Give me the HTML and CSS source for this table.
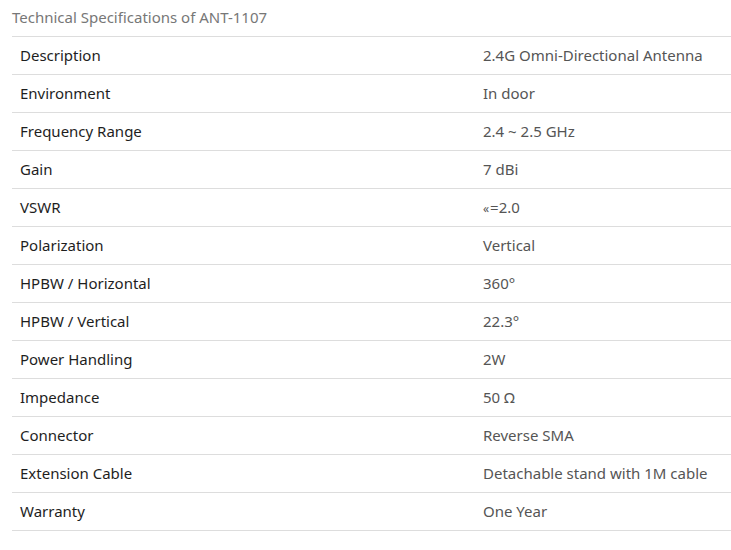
FILE: index.html
```html
<!DOCTYPE html>
<html>
<head>
<meta charset="utf-8">
<link rel="stylesheet" href="styles.css">
</head>
<body>
<div class="wrap">
  <div class="caption">Technical Specifications of ANT-1107</div>
  <table class="spec">
    <tbody>
      <tr><td class="k">Description</td><td class="v">2.4G Omni-Directional Antenna</td></tr>
      <tr><td class="k">Environment</td><td class="v">In door</td></tr>
      <tr><td class="k">Frequency Range</td><td class="v">2.4 ~ 2.5 GHz</td></tr>
      <tr><td class="k">Gain</td><td class="v">7 dBi</td></tr>
      <tr><td class="k">VSWR</td><td class="v"><span class="ll">&laquo;</span>=2.0</td></tr>
      <tr><td class="k">Polarization</td><td class="v">Vertical</td></tr>
      <tr><td class="k">HPBW / Horizontal</td><td class="v">360°</td></tr>
      <tr><td class="k">HPBW / Vertical</td><td class="v">22.3°</td></tr>
      <tr><td class="k">Power Handling</td><td class="v">2W</td></tr>
      <tr><td class="k">Impedance</td><td class="v">50 Ω</td></tr>
      <tr><td class="k">Connector</td><td class="v">Reverse SMA</td></tr>
      <tr><td class="k">Extension Cable</td><td class="v">Detachable stand with 1M cable</td></tr>
      <tr><td class="k">Warranty</td><td class="v">One Year</td></tr>
    </tbody>
  </table>
</div>
</body>
</html>
```
FILE: styles.css
```css
html, body {
  margin: 0;
  padding: 0;
  background: #fff;
}
body {
  font-family: "Noto Sans", "Open Sans", sans-serif;
  font-size: 15px;
}
.wrap {
  padding-left: 12px;
}
.caption {
  height: 36px;
  line-height: 35px;
  color: #777;
  font-size: 15px;
}
.spec {
  width: 719px;
  border-collapse: collapse;
  border-top: 1px solid #ddd;
}
.spec td {
  height: 38px;
  padding: 0 8px 2px;
  border-bottom: 1px solid #ddd;
  vertical-align: middle;
  box-sizing: border-box;
}
.spec td.k {
  width: 463px;
  color: #1e1e1e;
}
.spec td.v {
  color: #555;
}
.ll {
  font-size: 12px;
  letter-spacing: 1px;
}
```
